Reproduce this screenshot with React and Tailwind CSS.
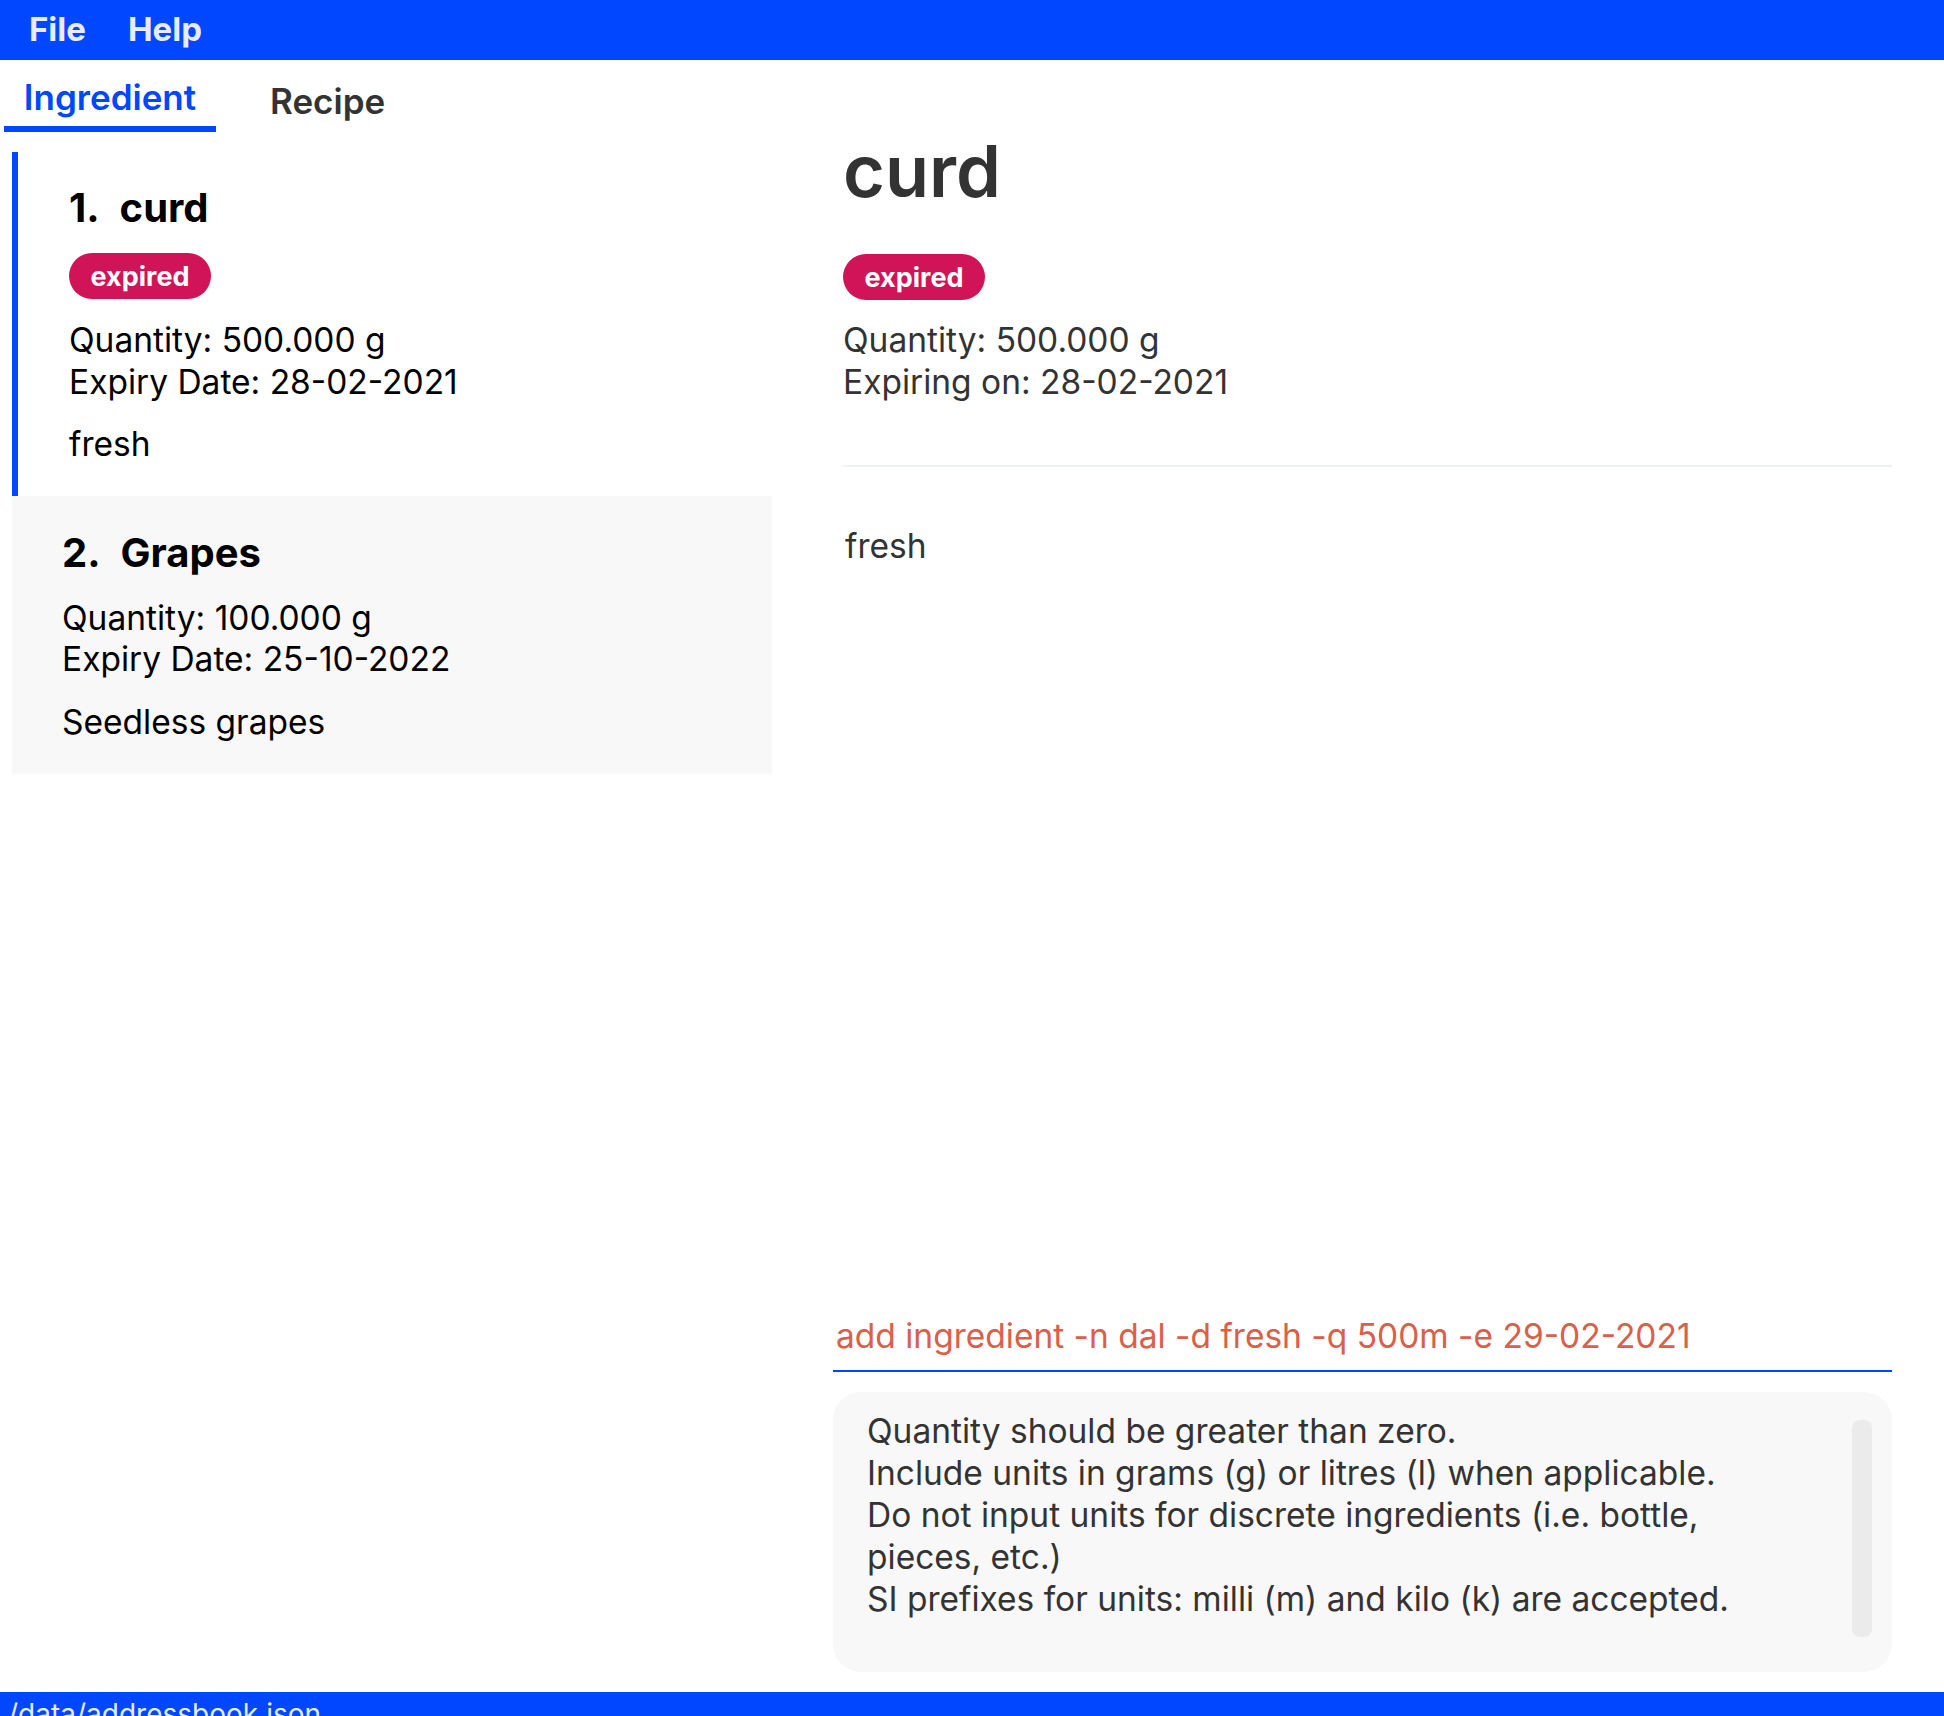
import React from "react";

const ingredients = [
  {
    id: 1,
    name: "curd",
    expired: true,
    quantity: "500.000 g",
    expiry: "28-02-2021",
    description: "fresh",
  },
  {
    id: 2,
    name: "Grapes",
    expired: false,
    quantity: "100.000 g",
    expiry: "25-10-2022",
    description: "Seedless grapes",
  },
];

const resultLines = [
  "Quantity should be greater than zero.",
  "Include units in grams (g) or litres (l) when applicable.",
  "Do not input units for discrete ingredients (i.e. bottle,",
  "pieces, etc.)",
  "SI prefixes for units: milli (m) and kilo (k) are accepted.",
];

const Badge = ({ className }) => (
  <div
    className={`h-[46px] w-[142px] rounded-full bg-[#d01457] flex items-center justify-center text-[27px] font-bold text-white leading-none ${className}`}
  >
    expired
  </div>
);

const IngredientCard = ({ item, selected }) => (
  <div
    className={
      selected
        ? "bg-white border-l-[6px] border-[#0047ff] pl-[51px] pt-[31px] pb-[30px]"
        : "bg-[#f8f8f8] pl-[50px] pt-[32px] pb-[31px]"
    }
  >
    <div className="flex gap-[20px] text-[40px] font-bold leading-[49px] text-black">
      <span>{item.id}.</span>
      <span>{item.name}</span>
    </div>
    {item.expired && <Badge className="mt-[21px]" />}
    <div
      className={
        item.expired
          ? "mt-[21px] text-[33.5px] leading-[41.5px] text-black"
          : "mt-[21px] text-[33.5px] leading-[41.5px] text-black"
      }
    >
      <p>Quantity: {item.quantity}</p>
      <p>Expiry Date: {item.expiry}</p>
    </div>
    <p className="mt-[21px] text-[33.5px] leading-[41.5px] text-black">
      {item.description}
    </p>
  </div>
);

const App = () => {
  const selected = ingredients[0];

  return (
    <div
      className="w-[1944px] h-[1716px] flex flex-col bg-white overflow-hidden"
      style={{ fontFamily: 'Inter, "Open Sans", sans-serif' }}
    >
      {/* MENU BAR */}
      <div className="h-[60px] shrink-0 bg-[#0047ff] flex items-center pl-[29px] gap-[42px] text-[33px] font-bold text-[#e6ecfa]">
        <span>File</span>
        <span>Help</span>
      </div>

      {/* MAIN */}
      <div className="flex-1 flex min-h-0">
        {/* LEFT: tabs + list */}
        <div className="w-[772px] shrink-0 flex flex-col">
          <div className="flex items-start h-[72px]">
            <div className="ml-[4px] w-[212px] pt-[17px] pb-[8px] border-b-[6px] border-[#0047ff] text-center text-[35px] font-semibold leading-[41px] text-[#0047ff]">
              Ingredient
            </div>
            <div className="pl-[54px] pt-[21px] text-[35px] font-semibold leading-[41px] text-[#333333]">
              Recipe
            </div>
          </div>

          <div className="mt-[20px] ml-[12px]">
            {ingredients.map((item) => (
              <IngredientCard
                key={item.id}
                item={item}
                selected={item.id === selected.id}
              />
            ))}
          </div>
        </div>

        {/* RIGHT: details + command */}
        <div className="ml-[61px] w-[1059px] flex flex-col pb-[20px]">
          <div className="pl-[10px] text-[#333333]">
            <h1 className="mt-[71px] text-[72px] font-semibold leading-[80px]">
              {selected.name}
            </h1>
            <Badge className="mt-[43px]" />
            <div className="mt-[20px] text-[33.5px] leading-[41.5px]">
              <p>Quantity: {selected.quantity}</p>
              <p>Expiring on: {selected.expiry}</p>
            </div>
            <div className="mt-[62px] h-[2px] bg-[#eef1f6]" />
            <p className="mt-[59px] pl-[2px] text-[33.5px] leading-[41.5px]">
              {selected.description}
            </p>
          </div>

          <div className="flex-1" />

          {/* COMMAND BOX */}
          <div className="pl-[3px] pb-[13px] border-b-2 border-[#0047ff] text-[33.5px] leading-[41.5px] text-[#d9604a] whitespace-nowrap">
            add ingredient -n dal -d fresh -q 500m -e 29-02-2021
          </div>

          {/* RESULT BOX */}
          <div className="mt-[20px] h-[280px] rounded-[28px] bg-[#f8f8f8] flex">
            <div className="flex-1 pl-[34px] pt-[18px] text-[33.5px] leading-[42px] text-[#333333] whitespace-nowrap">
              {resultLines.map((line, i) => (
                <p key={i}>{line}</p>
              ))}
            </div>
            <div className="mt-[28px] mr-[20px] h-[217px] w-[20px] rounded-[8px] bg-[#ebebeb]" />
          </div>
        </div>
      </div>

      {/* STATUS BAR */}
      <div className="h-[24px] shrink-0 bg-[#0047ff] overflow-hidden pl-[8px] pt-[2px] text-[28px] leading-[40px] text-[#e6ecfa]">
        /data/addressbook.json
      </div>
    </div>
  );
};

export default App;
